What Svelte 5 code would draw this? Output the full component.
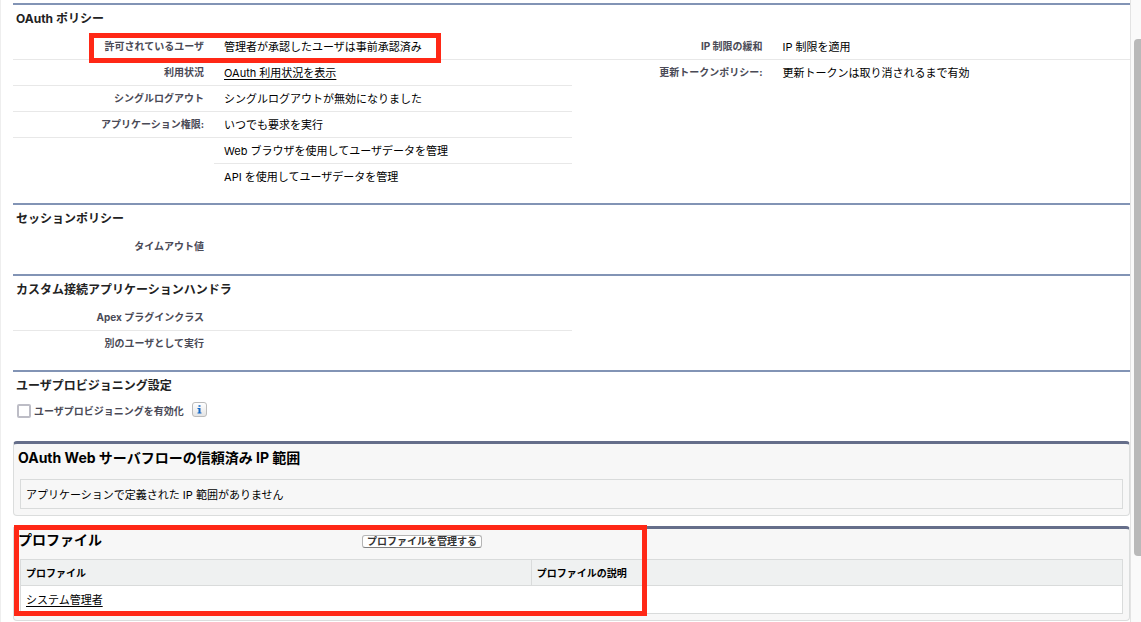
<script>
  let provisioning = $state(false);

  const permissions = [
    'いつでも要求を実行',
    'Web ブラウザを使用してユーザデータを管理',
    'API を使用してユーザデータを管理'
  ];
</script>

<div class="page">
  <main>
    <section class="oauth">
      <h2>OAuth ポリシー</h2>
      <dl class="pair lined">
        <div class="field"><dt>許可されているユーザ</dt><dd>管理者が承認したユーザは事前承認済み</dd></div>
        <div class="field"><dt>IP 制限の緩和</dt><dd>IP 制限を適用</dd></div>
        <div class="mark mark-field"></div>
      </dl>
      <dl class="pair">
        <div class="field lined"><dt>利用状況</dt><dd><a href="#usage">OAuth 利用状況を表示</a></dd></div>
        <div class="field"><dt>更新トークンポリシー:</dt><dd>更新トークンは取り消されるまで有効</dd></div>
      </dl>
      <dl class="half">
        <div class="field lined"><dt>シングルログアウト</dt><dd>シングルログアウトが無効になりました</dd></div>
        <div class="field">
          <dt class="lined">アプリケーション権限:</dt>
          {#each permissions as permission, i}
            <dd class:lined={i < permissions.length - 1}>{permission}</dd>
          {/each}
        </div>
      </dl>
    </section>

    <section class="session">
      <h2>セッションポリシー</h2>
      <dl class="half">
        <div class="field"><dt>タイムアウト値</dt><dd></dd></div>
      </dl>
    </section>

    <section>
      <h2>カスタム接続アプリケーションハンドラ</h2>
      <dl class="half">
        <div class="field lined"><dt>Apex プラグインクラス</dt><dd></dd></div>
        <div class="field"><dt>別のユーザとして実行</dt><dd></dd></div>
      </dl>
    </section>

    <section class="provisioning">
      <h2>ユーザプロビジョニング設定</h2>
      <div class="check">
        <input id="provisioning" type="checkbox" bind:checked={provisioning} />
        <label for="provisioning">ユーザプロビジョニングを有効化</label>
        <button class="info" type="button" aria-label="情報">
          <svg viewBox="0 0 15 15" width="15" height="15" aria-hidden="true">
            <path d="M6.5 3.2h2v1.6h-2zM5.5 6h3v4.6h1v1h-4v-1h1V7h-1z" fill="#1467c6" />
          </svg>
        </button>
      </div>
    </section>

    <article class="block">
      <header><h3>OAuth Web サーバフローの信頼済み IP 範囲</h3></header>
      <p class="empty">アプリケーションで定義された IP 範囲がありません</p>
    </article>

    <article class="block">
      <header>
        <h3>プロファイル</h3>
        <button class="manage" type="button">プロファイルを管理する</button>
      </header>
      <table>
        <thead>
          <tr><th scope="col" class="name">プロファイル</th><th scope="col">プロファイルの説明</th></tr>
        </thead>
        <tbody>
          <tr><td><a href="#admin">システム管理者</a></td><td></td></tr>
        </tbody>
      </table>
      <div class="mark mark-profile"></div>
    </article>
  </main>
  <div class="track"><div class="thumb"></div></div>
</div>

<style>
  :global(body) {
    margin: 0;
    background: #fff;
    overflow: hidden;
  }
  .page {
    display: flex;
    height: 100vh;
    box-sizing: border-box;
    border-left: 1px solid #eee;
    font: 11px/25px Inter, "Noto Sans CJK JP", sans-serif;
    color: #000;
  }
  main {
    flex: 1;
    min-width: 0;
    padding: 3px 0 0 12px;
  }
  h2, h3, dl, dd, p {
    margin: 0;
  }
  a {
    color: inherit;
    text-decoration: underline;
    text-underline-offset: 2px;
  }
  section {
    border-top: 2px solid #8294b5;
    padding-bottom: 13px;
  }
  section.session {
    padding-bottom: 14px;
  }
  h2 {
    padding: 0 0 2px 3px;
    font-size: 12px;
    line-height: 27px;
    font-weight: 700;
    color: #222;
  }
  .pair {
    position: relative;
    display: grid;
    grid-template-columns: 1fr 1fr;
  }
  .half {
    width: 50%;
  }
  .field {
    display: grid;
    grid-template-columns: 36% 1fr;
    border-bottom: 1px solid transparent;
  }
  .lined,
  .field.lined {
    border-bottom: 1px solid #e8e8e8;
  }
  .pair.lined .field {
    border-bottom: 0;
  }
  dt {
    padding-right: 10px;
    text-align: right;
    font-size: 10px;
    font-weight: 700;
    color: #4a4a56;
  }
  dd {
    grid-column: 2;
    box-sizing: content-box;
    padding: 1px 0 0 10px;
    min-height: 24px;
    line-height: 24px;
  }
  section.provisioning {
    padding-bottom: 20px;
  }
  .check {
    display: flex;
    align-items: center;
    height: 20px;
    padding-left: 4px;
    font-size: 10px;
    font-weight: 700;
    color: #4a4a56;
  }
  .check input {
    appearance: none;
    width: 14px;
    height: 14px;
    margin: 0 3px 0 0;
    border: 2px solid #bdbdc6;
    border-radius: 2px;
    background: #fff;
  }
  .check input:checked {
    background: #1467c6;
  }
  .info {
    width: 15px;
    height: 15px;
    margin: 0 0 4px 8px;
    padding: 0;
    box-sizing: border-box;
    border: 1px solid #bbb;
    border-radius: 3px;
    background: linear-gradient(#fff, #e4e4e4);
  }
  .info svg {
    display: block;
    margin: -1px;
  }
  .block {
    position: relative;
    margin-bottom: 10px;
    padding: 0 6px 6px;
    border: 1px solid #dbdddd;
    border-top: 3px solid #656e8a;
    border-radius: 4px;
    background: #f7f7f7;
  }
  .block header {
    display: grid;
    grid-template-columns: 31% 1fr;
    align-items: start;
    height: 35px;
  }
  .block:has(table) header {
    height: 30px;
  }
  h3 {
    margin-left: -2px;
    font-size: 14px;
    line-height: 28px;
    font-weight: 700;
    white-space: nowrap;
  }
  .block:has(table) h3 {
    line-height: 22px;
  }
  .manage {
    justify-self: start;
    display: flex;
    align-items: center;
    height: 13px;
    margin-top: 6px;
    padding: 0 4px;
    overflow: hidden;
    border: 1px solid #b5b5b5;
    border-bottom-color: #7f7f7f;
    border-radius: 3px;
    background: #fff;
    font: 700 10px/11px Inter, "Noto Sans CJK JP", sans-serif;
    color: #333;
  }
  .empty {
    padding: 3px 5px 0;
    border: 1px solid #d9dbdb;
  }
  table {
    width: 100%;
    table-layout: fixed;
    border: 1px solid #d9dbdb;
    border-spacing: 0;
    background: #fff;
  }
  th, td {
    padding: 0 6px 0 5px;
    text-align: left;
  }
  th {
    padding-top: 1px;
    border-bottom: 1px solid #d9dbdb;
    background: #eff1f1;
    font-size: 10px;
    line-height: 24px;
    font-weight: 700;
  }
  th.name {
    box-sizing: border-box;
    width: 46.4%;
    border-right: 1px solid #d9dbdb;
  }
  td {
    padding-top: 1px;
    line-height: 26px;
  }
  /* Highlight frames drawn over the content */
  .mark {
    position: absolute;
    box-sizing: border-box;
    border: 5px solid #ff2816;
    pointer-events: none;
  }
  .mark-field {
    left: 76px;
    top: -1px;
    width: 352px;
    height: 30px;
  }
  .mark-profile {
    left: 0;
    top: -4px;
    width: 633px;
    height: 91px;
  }
  .track {
    flex: 0 0 11px;
    box-sizing: border-box;
    padding: 39px 0 66px 3px;
    border-left: 1px solid #e3e3e3;
    background: #fafafa;
  }
  .thumb {
    height: 100%;
    border-radius: 4px 0 0 4px;
    background: #b9b9b9;
  }
</style>
